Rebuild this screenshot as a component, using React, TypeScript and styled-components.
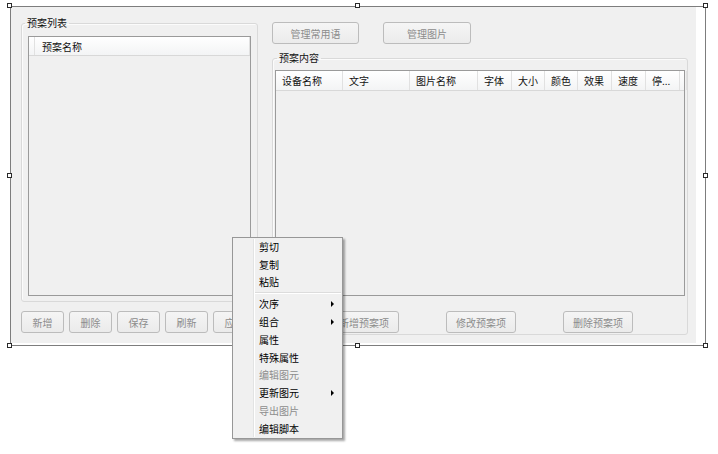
import React from 'react';
import styled, { createGlobalStyle } from 'styled-components';

const GlobalStyle = createGlobalStyle`
  html, body {
    margin: 0;
    padding: 0;
    background: #ffffff;
  }
  body {
    font-family: "Noto Sans CJK SC", "Noto Sans", sans-serif;
    font-size: 10px;
    color: #000;
  }
`;

type HandleProps = {
  $x: 'left' | 'center' | 'right';
  $y: 'top' | 'middle' | 'bottom';
};

type WidthProps = {
  $w: number;
};

const Canvas = styled.div`
    position: relative;
    width: 718px;
    height: 454px;
    box-sizing: border-box;
    padding: 6px 0 0 10px;
    background: #ffffff;
    overflow: hidden;
  `,
  Frame = styled.div`
    position: relative;
    width: 696px;
    height: 340px;
    box-sizing: border-box;
    border: 1px solid #7d7d7d;
    display: flex;
    background: #ffffff;
  `,
  Handle = styled.div<HandleProps>`
    position: absolute;
    width: 5px;
    height: 5px;
    box-sizing: border-box;
    border: 1px solid #2a2a2a;
    background: #ffffff;
    left: ${(p) => (p.$x === 'left' ? '-4px' : p.$x === 'center' ? 'calc(50% - 3px)' : 'calc(100% - 2px)')};
    top: ${(p) => (p.$y === 'top' ? '-4px' : p.$y === 'middle' ? 'calc(50% - 3px)' : 'calc(100% - 2px)')};
  `,
  Form = styled.div`
    flex: 1;
    display: flex;
    gap: 14px;
    margin: 0 9px 2px 0;
    padding: 9px 0 8px 10px;
    background: #f0f0f0;
  `,
  LeftCol = styled.div`
    width: 237px;
    display: flex;
    flex-direction: column;
  `,
  RightCol = styled.div`
    width: 416px;
    display: flex;
    flex-direction: column;
  `,
  Group = styled.fieldset<{ $pad: string }>`
    flex: 1;
    min-width: 0;
    margin: 0;
    padding: ${(p) => p.$pad};
    border: 1px solid #d9d9d9;
    border-radius: 3px;
    box-shadow: inset 1px 1px 0 #fbfbfb;
    display: flex;
    flex-direction: column;
  `,
  Legend = styled.legend<{ $offset: number }>`
    margin-left: ${(p) => p.$offset}px;
    padding: 0 2px;
    line-height: 14px;
    font-size: 10px;
    color: #111;
  `,
  ListBox = styled.div`
    flex: 1;
    border: 1px solid #9a9a9a;
    background: #f0f0f0;
    display: flex;
    flex-direction: column;
  `,
  HeaderRow = styled.div<{ $h: number }>`
    height: ${(p) => p.$h}px;
    display: flex;
    background: linear-gradient(#ffffff, #f3f4f5);
    border-bottom: 1px solid #d8d8d8;
  `,
  HeaderCell = styled.div<{ $w?: number; $pad: number }>`
    ${(p) => (p.$w ? `width: ${p.$w}px;` : 'flex: 1;')}
    flex-shrink: 0;
    box-sizing: border-box;
    padding-left: ${(p) => p.$pad}px;
    border-right: 1px solid #e1e1e1;
    font-size: 10px;
    display: flex;
    align-items: center;
    white-space: nowrap;
    overflow: hidden;
    color: #111;
  `,
  ButtonRow = styled.div<{ $gap: number; $pad?: string }>`
    display: flex;
    gap: ${(p) => p.$gap}px;
    padding: ${(p) => p.$pad || '0'};
  `,
  Button = styled.button<WidthProps>`
    width: ${(p) => p.$w}px;
    height: 22px;
    padding: 0;
    box-sizing: border-box;
    border: 1px solid #bcbcbc;
    border-radius: 3px;
    background: linear-gradient(#f5f5f5, #ebebeb);
    color: #8c8c8c;
    font-family: "Noto Sans CJK SC", "Noto Sans", sans-serif;
    font-size: 10px;
  `,
  Menu = styled.div`
    position: absolute;
    left: 232px;
    top: 237px;
    width: 111px;
    box-sizing: border-box;
    border: 1px solid #979797;
    background: #f0f0f0;
    box-shadow: 2px 2px 2px rgba(0, 0, 0, 0.35);
    &::before {
      content: '';
      position: absolute;
      left: 20px;
      top: 1px;
      bottom: 1px;
      width: 1px;
      background: #e2e3e3;
      border-right: 1px solid #ffffff;
    }
  `,
  MenuItem = styled.div<{ $disabled?: boolean }>`
    position: relative;
    height: 17.8px;
    box-sizing: border-box;
    display: flex;
    align-items: center;
    padding: 0 8px 1px 26px;
    font-size: 10px;
    color: ${(p) => (p.$disabled ? '#8d8d8d' : '#000')};
  `,
  Arrow = styled.span`
    margin-left: auto;
    width: 0;
    height: 0;
    border-left: 3px solid #000;
    border-top: 3px solid transparent;
    border-bottom: 3px solid transparent;
  `,
  MenuSeparator = styled.div`
    position: relative;
    height: 1px;
    margin: 1px 1px 1px 22px;
    background: #dcdcdc;
    border-bottom: 1px solid #ffffff;
  `;

const columns: { label: string; w?: number }[] = [
  { label: '设备名称', w: 67 },
  { label: '文字', w: 67 },
  { label: '图片名称', w: 68 },
  { label: '字体', w: 34 },
  { label: '大小', w: 33 },
  { label: '颜色', w: 33 },
  { label: '效果', w: 34 },
  { label: '速度', w: 34 },
  { label: '停...', w: 34 },
  { label: '' },
];

const menuItems: { label: string; disabled?: boolean; sub?: boolean; sep?: boolean }[] = [
  { label: '剪切' },
  { label: '复制' },
  { label: '粘贴' },
  { label: '', sep: true },
  { label: '次序', sub: true },
  { label: '组合', sub: true },
  { label: '属性' },
  { label: '特殊属性' },
  { label: '编辑图元', disabled: true },
  { label: '更新图元', sub: true },
  { label: '导出图片', disabled: true },
  { label: '编辑脚本' },
];

const handles: HandleProps[] = [
  { $x: 'left', $y: 'top' },
  { $x: 'center', $y: 'top' },
  { $x: 'right', $y: 'top' },
  { $x: 'left', $y: 'middle' },
  { $x: 'right', $y: 'middle' },
  { $x: 'left', $y: 'bottom' },
  { $x: 'center', $y: 'bottom' },
  { $x: 'right', $y: 'bottom' },
];

const App = () => {
  return (
    <Canvas>
      <GlobalStyle />
      <Frame>
        <Form>
          <LeftCol>
            <Group $pad="6px 6px 5px 6px">
              <Legend $offset={-3}>预案列表</Legend>
              <ListBox>
                <HeaderRow $h={18}>
                  <HeaderCell $w={6} $pad={0} />
                  <HeaderCell $pad={7}>预案名称</HeaderCell>
                </HeaderRow>
              </ListBox>
            </Group>
            <ButtonRow $gap={5} $pad="9px 0 2px 0">
              <Button $w={43}>新增</Button>
              <Button $w={43}>删除</Button>
              <Button $w={43}>保存</Button>
              <Button $w={43}>刷新</Button>
              <Button $w={43}>应用</Button>
            </ButtonRow>
          </LeftCol>
          <RightCol>
            <ButtonRow $gap={24} $pad="6px 0 7px 0">
              <Button $w={87}>管理常用语</Button>
              <Button $w={88}>管理图片</Button>
            </ButtonRow>
            <Group $pad="5px 2px 1px 2px">
              <Legend $offset={2}>预案内容</Legend>
              <ListBox>
                <HeaderRow $h={19}>
                  {columns.map((c, i) => (
                    <HeaderCell key={i} $w={c.w} $pad={6}>
                      {c.label}
                    </HeaderCell>
                  ))}
                </HeaderRow>
              </ListBox>
              <ButtonRow $gap={47} $pad="15px 0 0 54px">
                <Button $w={70}>新增预案项</Button>
                <Button $w={70}>修改预案项</Button>
                <Button $w={70}>删除预案项</Button>
              </ButtonRow>
            </Group>
          </RightCol>
        </Form>
        {handles.map((h, i) => (
          <Handle key={i} $x={h.$x} $y={h.$y} />
        ))}
      </Frame>
      <Menu>
        {menuItems.map((m, i) =>
          m.sep ? (
            <MenuSeparator key={i} />
          ) : (
            <MenuItem key={i} $disabled={m.disabled}>
              {m.label}
              {m.sub && <Arrow />}
            </MenuItem>
          ),
        )}
      </Menu>
    </Canvas>
  );
};

export default App;
